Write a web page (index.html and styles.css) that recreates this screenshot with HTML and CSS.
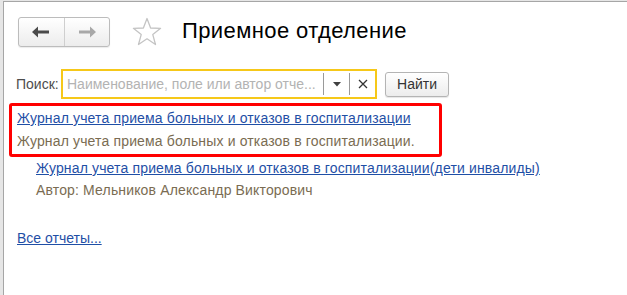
FILE: index.html
```html
<!DOCTYPE html>
<html lang="ru">
<head>
    <meta charset="utf-8">
    <title>Приемное отделение</title>
    <link rel="stylesheet" href="styles.css">
</head>
<body>
    <div id="window">
        <div id="header">
            <div class="nav-group">
                <button class="nav-btn">
                    <svg width="18" height="12" viewBox="0 0 18 12"><path d="M0 6 L6 0.5 L6 4.5 L17 4.5 L17 7.5 L6 7.5 L6 11.5 Z" fill="#4a4a4a"/></svg>
                </button>
                <button class="nav-btn">
                    <svg width="18" height="12" viewBox="0 0 18 12"><path d="M18 6 L12 0.5 L12 4.5 L1 4.5 L1 7.5 L12 7.5 L12 11.5 Z" fill="#a8a8a8"/></svg>
                </button>
            </div>
            <svg class="star" width="30" height="30" viewBox="0 0 30 30">
                <path d="M15 1.5 L18.6 11 L28.6 11.3 L20.8 17.6 L23.5 27.5 L15 21.8 L6.5 27.5 L9.2 17.6 L1.4 11.3 L11.4 11 Z" fill="none" stroke="#c4c4c4" stroke-width="1.3" stroke-linejoin="round"/>
            </svg>
            <div class="title">Приемное отделение</div>
        </div>

        <div id="searchRow">
            <span class="search-label">Поиск:</span>
            <div class="search-box">
                <span class="placeholder">Наименование, поле или автор отче...</span>
                <span class="sep"></span>
                <span class="drop">
                    <svg width="8" height="5" viewBox="0 0 8 5"><path d="M0 0 L8 0 L4 4.5 Z" fill="#404040"/></svg>
                </span>
                <span class="sep"></span>
                <span class="clear">
                    <svg width="10" height="10" viewBox="0 0 10 10"><path d="M1 1 L9 9 M9 1 L1 9" stroke="#333" stroke-width="1.3"/></svg>
                </span>
            </div>
            <button class="find-btn">Найти</button>
        </div>

        <div class="report highlight">
            <a class="link" href="#">Журнал учета приема больных и отказов в госпитализации</a>
            <div class="note">Журнал учета приема больных и отказов в госпитализации.</div>
        </div>

        <div class="report indented">
            <a class="link" href="#">Журнал учета приема больных и отказов в госпитализации(дети инвалиды)</a>
            <div class="note">Автор: Мельников Александр Викторович</div>
        </div>

        <div class="all-reports">
            <a class="link" href="#">Все отчеты...</a>
        </div>
    </div>
</body>
</html>
```

FILE: styles.css
```css
html, body {
    height: 100%;
}

body {
    margin: 0;
    padding: 1px 0 0 3px;
    box-sizing: border-box;
    background-color: #e6e6e6;
    font-family: "Liberation Sans", Arial, sans-serif;
    font-size: 14px;
    overflow: hidden;
}

#window {
    height: 100%;
    background-color: #fff;
    border-top: 1px solid #a6a6a6;
    border-left: 1px solid #a6a6a6;
    box-sizing: border-box;
}

#header {
    display: flex;
    align-items: center;
    padding: 14px 0 0 14px;
    height: 32px;
}

.nav-group {
    display: flex;
    width: 92px;
    height: 30px;
    box-sizing: border-box;
    border: 1px solid #bcbcbc;
    border-radius: 3px;
    background: linear-gradient(#ffffff, #ececec);
    box-shadow: 0 1px 1px rgba(0, 0, 0, 0.08);
}

.nav-btn {
    flex: 1;
    display: flex;
    align-items: center;
    justify-content: center;
    padding: 0;
    border: none;
    background: transparent;
}

.nav-btn + .nav-btn {
    border-left: 1px solid #cfcfcf;
}

.star {
    margin-left: 22px;
}

.title {
    margin-left: 20px;
    font-size: 22px;
    letter-spacing: 0.4px;
    color: #000;
    margin-top: -2px;
}

#searchRow {
    display: flex;
    align-items: center;
    padding: 21px 0 0 12px;
}

.search-label {
    width: 45px;
    color: #4d4d4d;
    white-space: nowrap;
}

.search-box {
    display: flex;
    align-items: center;
    width: 316px;
    height: 30px;
    box-sizing: border-box;
    border: 2px solid #f6c819;
    padding-left: 4px;
}

.placeholder {
    flex: 1;
    overflow: hidden;
    color: #b3b3b3;
    white-space: nowrap;
}

.sep {
    width: 1px;
    height: 22px;
    background-color: #9a9a9a;
}

.drop, .clear {
    width: 25px;
    display: flex;
    align-items: center;
    justify-content: center;
}

.find-btn {
    margin-left: 8px;
    width: 64px;
    height: 25px;
    font-family: inherit;
    font-size: 14px;
    color: #333;
    border: 1px solid #b4b4b4;
    border-radius: 3px;
    background: linear-gradient(#ffffff, #ececec);
    box-shadow: 0 1px 1px rgba(0, 0, 0, 0.1);
}

.report {
    line-height: 23px;
    letter-spacing: 0.15px;
}

.link {
    color: #1f4fa6;
    text-decoration: underline;
}

.note {
    color: #7a6c52;
}

.highlight {
    margin: 4px 0 0 5px;
    width: 433px;
    box-sizing: border-box;
    border: 3px solid #ff0000;
    border-radius: 3px;
    padding: 1px 5px 1px 5px;
}

.indented {
    padding-left: 32px;
    line-height: 22px;
    margin-top: 0;
}

.all-reports {
    padding: 29px 0 0 13px;
}
```
